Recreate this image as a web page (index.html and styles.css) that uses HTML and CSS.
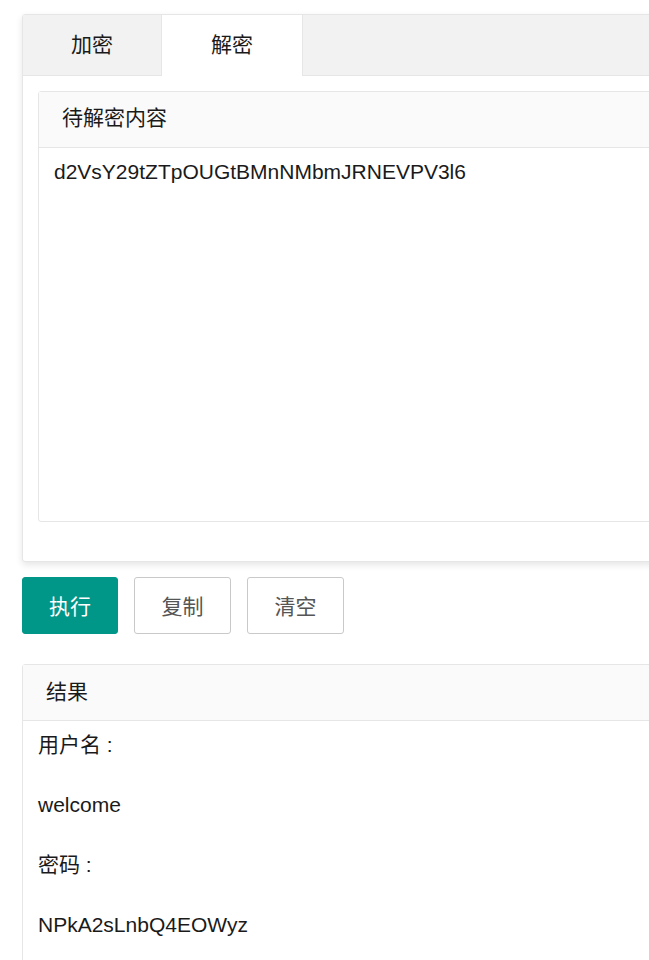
FILE: index.html
```html
<!DOCTYPE html>
<html lang="zh-CN">
<head>
<meta charset="utf-8">
<title>解密</title>
<link rel="stylesheet" href="styles.css">
</head>
<body>
<div class="page">
  <div class="tab-card">
    <ul class="tab-title">
      <li class="tab">加密</li>
      <li class="tab active">解密</li>
    </ul>
    <div class="tab-content">
      <div class="panel">
        <div class="panel-header">待解密内容</div>
        <div class="panel-body">d2VsY29tZTpOUGtBMnNMbmJRNEVPV3l6</div>
      </div>
    </div>
  </div>
  <div class="actions">
    <button class="btn btn-primary">执行</button>
    <button class="btn">复制</button>
    <button class="btn">清空</button>
  </div>
  <div class="result">
    <div class="result-header">结果</div>
    <div class="result-body">
      <p>用户名 :</p>
      <p>welcome</p>
      <p>密码 :</p>
      <p>NPkA2sLnbQ4EOWyz</p>
    </div>
  </div>
</div>
</body>
</html>
```
FILE: styles.css
```css
html, body {
  margin: 0;
  padding: 0;
  overflow: hidden;
  background: #fff;
}
body {
  font-family: "Liberation Sans", Arial, "Noto Sans CJK SC", sans-serif;
  font-size: 21px;
  color: #1a1a1a;
}
.page {
  width: 760px;
  padding: 14px 0 0 22px;
}
.tab-card {
  border: 1px solid #e6e6e6;
  border-radius: 3px;
  box-shadow: 0 3px 7px rgba(0, 0, 0, 0.1);
  background: #fff;
}
.tab-title {
  list-style: none;
  margin: 0;
  padding: 0;
  display: flex;
  height: 60px;
  background: #f2f2f2;
  border-bottom: 1px solid #e6e6e6;
}
.tab {
  width: 138px;
  height: 60px;
  display: flex;
  align-items: center;
  justify-content: center;
  padding-bottom: 5px;
  box-sizing: border-box;
}
.tab.active {
  width: 142px;
  background: #fff;
  border-left: 1px solid #e6e6e6;
  border-right: 1px solid #e6e6e6;
  height: 61px;
  padding-bottom: 6px;
}
.tab-content {
  padding: 15px 0 39px 15px;
}
.panel {
  border: 1px solid #e6e6e6;
  border-radius: 3px;
  height: 431px;
  box-sizing: border-box;
}
.panel-header {
  height: 55px;
  line-height: 51px;
  padding-left: 23px;
  background: #fafafa;
  border-bottom: 1px solid #e6e6e6;
}
.panel-body {
  padding: 11px 15px;
  line-height: 25px;
}
.actions {
  display: flex;
  gap: 16px;
  margin-top: 15px;
}
.btn {
  height: 57px;
  width: 97px;
  padding: 0 0 2px;
  font-family: inherit;
  font-size: 21px;
  color: #555;
  background: #fff;
  border: 1px solid #c9c9c9;
  border-radius: 3px;
}
.btn-primary {
  width: 96px;
  background: #009688;
  border-color: #009688;
  color: #fff;
}
.result {
  margin-top: 30px;
  border: 1px solid #e6e6e6;
  border-radius: 3px;
}
.result-header {
  height: 55px;
  line-height: 53px;
  padding-left: 23px;
  background: #fafafa;
  border-bottom: 1px solid #e6e6e6;
}
.result-body {
  padding: 9px 15px;
  line-height: 30px;
}
.result-body p {
  margin: 0 0 30px;
}
```
